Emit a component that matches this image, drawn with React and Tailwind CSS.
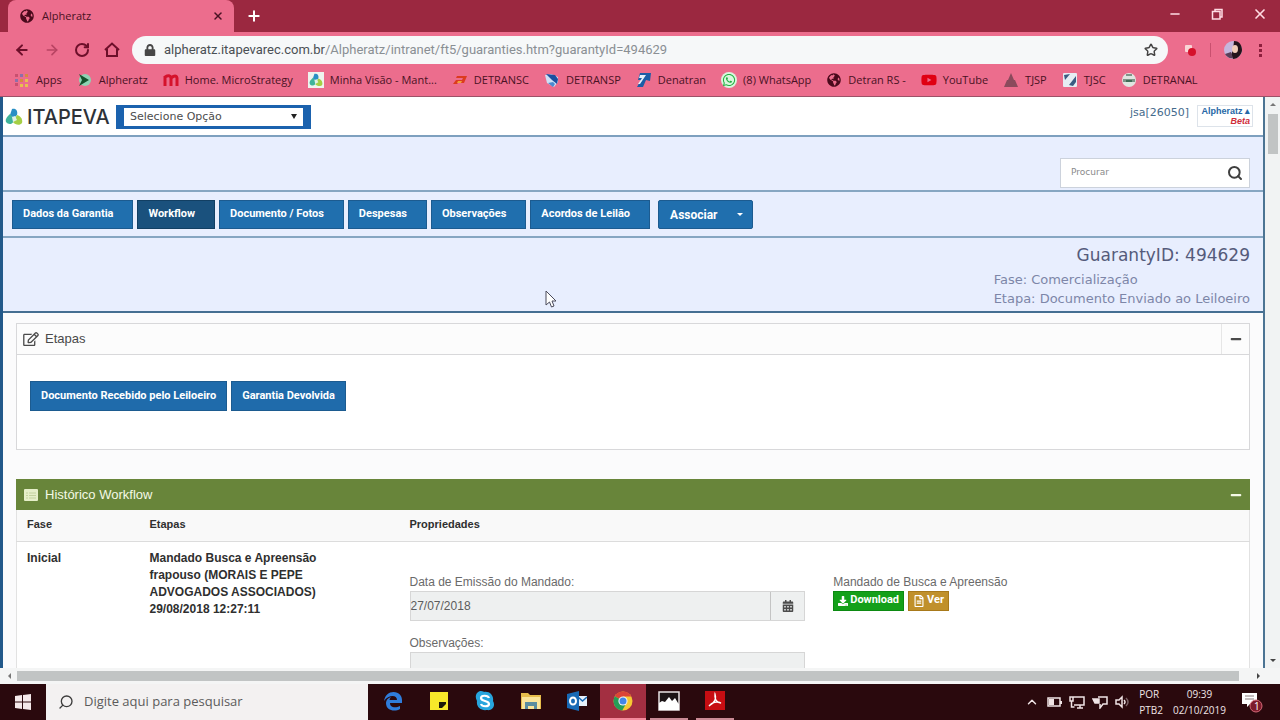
import {
  FaGlobeAmericas,
  FaLock,
  FaRegEdit,
  FaCalendarAlt,
  FaWhatsapp,
  FaYoutube,
  FaDownload,
  FaRegFileAlt,
  FaMinus,
} from "react-icons/fa";
import { ArrowLeft, ArrowRight, RotateCw, Plus, X, Minus, Star, Search, ChevronUp } from "lucide-react";

const GlobeIcon = () => <FaGlobeAmericas className="w-3.5 h-3.5 text-[#4a0a1c]" />;

const ItapevaMark = ({ className }) => (
  <svg viewBox="0 0 18 18" className={className} aria-hidden="true">
    <path d="M7 1c4-1 6 2 5 6l-3 3-4-3z" fill="#2a8fc4" />
    <path d="M5 6 9 11c0 6-6 6-8 3-1-3 1-5 4-8z" fill="#3fb39a" />
    <path d="M12 7c4 1 6 5 5 8-2 3-7 2-9-1z" fill="#a5cf45" />
    <path d="M7 9l3-1 2 4-4 2z" fill="#dff2e4" />
  </svg>
);

const BOOKMARKS = [
  {
    label: "Apps",
    icon: (
      <svg viewBox="0 0 16 16" className="w-4 h-4">
        <path d="M1 2h3v3H1zM1 11h3v3H1z" fill="#c9506f" />
        <path d="M6 2h3v3H6zM1 7h3v3H1z" fill="#8f6fa8" />
        <path d="M11 2h3v3h-3zM6 7h3v3H6z" fill="#d8893f" />
        <path d="M11 7h3v3h-3zM6 12h3v3H6zM11 12h3v3h-3z" fill="#e8c04f" />
      </svg>
    ),
  },
  {
    label: "Alpheratz",
    icon: (
      <svg viewBox="0 0 16 16" className="w-4 h-4">
        <circle cx="8" cy="8" r="6" fill="#8fd3b4" />
        <path d="M2 2l10 6-10 6 3-6z" fill="#14532d" />
      </svg>
    ),
  },
  {
    label: "Home. MicroStrategy",
    icon: (
      <svg viewBox="0 0 16 16" className="w-4 h-4">
        <path d="M2 14V4M2 5q5-3 6 1v8M8 6q5-4 6 0v8" fill="none" stroke="#d5122c" strokeWidth="3" />
      </svg>
    ),
  },
  {
    label: "Minha Visão - Mant...",
    icon: (
      <span className="flex w-4 h-4 items-center justify-center bg-[#eef4ee]">
        <ItapevaMark className="w-3.5 h-3.5" />
      </span>
    ),
  },
  {
    label: "DETRANSC",
    icon: (
      <svg viewBox="0 0 16 16" className="w-4 h-4">
        <path d="M1 12l3-4h6l1-2H4l1-2h10l-3 7H6l-1 1z" fill="#dc3b1f" />
        <path d="M6 9h4l-1 2H5z" fill="#f0a13c" />
      </svg>
    ),
  },
  {
    label: "DETRANSP",
    icon: (
      <svg viewBox="0 0 16 16" className="w-4 h-4">
        <path d="M1 3l6-1 7 3v5l-4 5-7-4z" fill="#cfe0f5" />
        <path d="M2 2l9 1 3 4-1 5-5-4z" fill="#1b4fa0" />
        <path d="M4 11l5-1 2 2-2 3z" fill="#4a8ad0" />
      </svg>
    ),
  },
  {
    label: "Denatran",
    icon: (
      <svg viewBox="0 0 16 16" className="w-4 h-4">
        <path d="M4 1h11l-1 8-4-1-3 7H1l4-7H2z" fill="#1a5da6" />
        <path d="M4 3h6l-6 9H2l4-6H3z" fill="#e4f0fa" />
      </svg>
    ),
  },
  {
    label: "(8) WhatsApp",
    icon: (
      <span className="flex w-4 h-4 items-center justify-center rounded-full bg-[#d9f7dd]">
        <FaWhatsapp className="w-3.5 h-3.5 text-[#1fb141]" />
      </span>
    ),
  },
  { label: "Detran RS -", icon: <GlobeIcon /> },
  {
    label: "YouTube",
    icon: <FaYoutube className="w-4 h-4 text-[#e00012]" />,
  },
  {
    label: "TJSP",
    icon: (
      <svg viewBox="0 0 16 16" className="w-4 h-4">
        <path d="M8 1l3 7h1l3 7H1l3-7h1z" fill="#8b4a5c" />
      </svg>
    ),
  },
  {
    label: "TJSC",
    icon: (
      <svg viewBox="0 0 16 16" className="w-4 h-4">
        <rect x="1" y="1" width="14" height="14" rx="1" fill="#e6edf3" />
        <path d="M2 3l6-1-5 6zM7 13l7-9v6l-3 4z" fill="#3b5c82" />
      </svg>
    ),
  },
  {
    label: "DETRANAL",
    icon: (
      <svg viewBox="0 0 16 16" className="w-4 h-4">
        <circle cx="8" cy="8" r="7" fill="#dfe5e0" />
        <path d="M5 2h6v2H5zM2 7h12v3H2z" fill="#7d9488" />
        <path d="M5 8h6v2H5z" fill="#3f6b55" />
      </svg>
    ),
  },
];

const NAV_ITEMS = [
  { label: "Dados da Garantia" },
  { label: "Workflow", active: true },
  { label: "Documento / Fotos" },
  { label: "Despesas" },
  { label: "Observações" },
  { label: "Acordos de Leilão" },
];

const BrowserChrome = () => (
  <header className="shrink-0 bg-[#ec6d8d] font-['Open_Sans',sans-serif] text-[#4a1224]">
    {/* Tabs */}
    <div className="flex h-8 items-end bg-[#9b2840] pl-2">
      <div className="flex h-full w-[226px] items-center rounded-t-lg bg-[#ec6d8d] pl-3 pr-2.5">
        <GlobeIcon />
        <span className="ml-2 flex-1 text-[11px]">Alpheratz</span>
        <button type="button" aria-label="Fechar guia">
          <X className="h-3 w-3" strokeWidth={3} />
        </button>
      </div>
      <button type="button" aria-label="Nova guia" className="ml-3 flex h-full items-center text-white">
        <Plus className="h-4 w-4" strokeWidth={3} />
      </button>
      <div className="ml-auto flex h-7 items-center gap-7 self-start pr-3 text-[#ffdbe3]">
        <button type="button" aria-label="Minimizar">
          <Minus className="h-3.5 w-3.5" strokeWidth={2.5} />
        </button>
        <button type="button" aria-label="Restaurar">
          <svg viewBox="0 0 14 14" className="h-3.5 w-3.5" fill="none" stroke="currentColor" strokeWidth="1.500">
            <path d="M5 4V2.500h7V10h-2M2.500 4.500H10V12H2.500z" />
          </svg>
        </button>
        <button type="button" aria-label="Fechar">
          <X className="h-4 w-4" strokeWidth={2.5} />
        </button>
      </div>
    </div>

    {/* Address bar */}
    <div className="flex h-9 items-center px-3.5 text-[#6d0f2a]">
      <div className="flex w-[118px] shrink-0 items-center gap-3.5">
        <button type="button" aria-label="Voltar">
          <ArrowLeft className="h-4 w-4" strokeWidth={3} />
        </button>
        <button type="button" aria-label="Avançar" className="text-[#b84463]">
          <ArrowRight className="h-4 w-4" strokeWidth={2.5} />
        </button>
        <button type="button" aria-label="Recarregar">
          <RotateCw className="h-4 w-4" strokeWidth={3} />
        </button>
        <button type="button" aria-label="Início">
          {/* plain outline house */}
          <svg viewBox="0 0 16 16" className="h-4 w-4" fill="none" stroke="currentColor" strokeWidth="2">
            <path d="M1 8l7-6.500L15 8M3 7v7h10V7" />
          </svg>
        </button>
      </div>
      <div className="flex h-7 flex-1 items-center rounded-full bg-[#f6f8f9] pl-3 pr-2.5">
        <FaLock className="h-3 w-3 text-[#474747]" />
        <div className="ml-2 flex-1 font-[Roboto,sans-serif] text-[13px] text-[#8a8f94]">
          <span className="text-[#4a4f54]">alpheratz.itapevarec.com.br</span>
          /Alpheratz/intranet/ft5/guaranties.htm?guarantyId=494629
        </div>
        <Star className="h-3.5 w-3.5 text-[#444]" strokeWidth={2.5} />
      </div>
      <div className="ml-4 flex items-center">
        <svg viewBox="0 0 14 14" className="h-3.5 w-3.5">
          <rect x="1" y="2" width="7" height="7" rx="1" fill="#f8d4d6" />
          <circle cx="8" cy="9" r="4" fill="#d5112b" />
        </svg>
        <span className="ml-3 h-3.5 w-px bg-[#c9506f]" />
        <svg viewBox="0 0 20 20" className="ml-3 h-5 w-5">
          <circle cx="10" cy="10" r="9" fill="#c5b6dd" />
          <path d="M11 1c6 0 8 5 8 9s-4 9-9 9l-2-4 2-5z" fill="#24141b" />
          <ellipse cx="12" cy="9" rx="3" ry="4" fill="#f1cdb8" />
          <path d="M2 14l6-2 2 6q-5 1-8-4z" fill="#5b3f59" />
        </svg>
        <span className="ml-4 mr-1 flex flex-col gap-0.5">
          <i className="h-[3px] w-[3px] bg-[#8d1f3d]" />
          <i className="h-[3px] w-[3px] bg-[#8d1f3d]" />
          <i className="h-[3px] w-[3px] bg-[#8d1f3d]" />
        </span>
      </div>
    </div>

    {/* Bookmarks */}
    <nav className="flex h-[29px] items-center gap-[15px] overflow-hidden border-b border-[#9c5268] px-3.5 pb-1">
      {BOOKMARKS.map((item) => (
        <a key={item.label} href="#" className="flex shrink-0 items-center gap-1.5 whitespace-nowrap text-[11px]">
          <span className="flex w-4 justify-center">{item.icon}</span>
          {item.label}
        </a>
      ))}
    </nav>
  </header>
);

const SiteHeader = () => (
  <div className="flex h-10 items-start border-b-2 border-[#7ea0bf] bg-white pl-0.5 pr-2.5">
    <div className="mt-2 flex w-[111px] items-center gap-1">
      <ItapevaMark className="h-[18px] w-[18px] shrink-0" />
      <span className="whitespace-nowrap font-[Inter,sans-serif] text-[20px] font-medium leading-6 text-[#2e3238]">
        ITAPEVA
      </span>
    </div>
    <div className="relative mt-2 flex h-6 w-[195px] border-x-8 border-y-[3px] border-[#1b62ae] bg-white">
      <select
        aria-label="Selecione Opção"
        className="h-full w-full appearance-none bg-transparent pl-1.5 font-['DejaVu_Sans',sans-serif] text-[11px] leading-[18px] text-[#4c4c4c]"
      >
        <option>Selecione Opção</option>
      </select>
      <span className="pointer-events-none absolute right-1.5 top-1.5 border-x-[3px] border-t-[5px] border-x-transparent border-t-[#222]" />
    </div>
    <div className="ml-auto mt-2 flex items-start gap-2">
      <span className="font-['DejaVu_Sans',sans-serif] text-[11px] leading-4 text-[#456a8c]">jsa[26050]</span>
      <div className="flex w-14 flex-col items-end border border-[#dde3ea] px-0.5 text-[9px] font-bold leading-[10px]">
        <span className="text-[#2767a6]">Alpheratz ▴</span>
        <span className="italic text-[#cf2c39]">Beta</span>
      </div>
    </div>
  </div>
);

const SiteNav = () => (
  <div className="flex h-[46px] items-start gap-1 border-b-2 border-[#86a6c2] px-[9px] pt-2 font-[Roboto,sans-serif] text-[11px] font-bold text-white">
    {NAV_ITEMS.map((item) => (
      <button
        key={item.label}
        type="button"
        className={
          item.active
            ? "h-[29px] border border-[#123f63] bg-[#1a517d] pl-2.5 pr-[19px]"
            : "h-[29px] border border-[#1c5b90] bg-[#206fae] pl-2.5 pr-[19px]"
        }
      >
        {item.label}
      </button>
    ))}
    <div className="ml-1 flex h-[29px] rounded-xs border border-[#1c5b90] bg-[#206fae] text-[12px]">
      <button type="button" className="px-[11px]">
        Associar
      </button>
      <button type="button" aria-label="Abrir menu" className="flex w-6 items-center justify-center">
        <span className="border-x-[3px] border-t-[3px] border-x-transparent border-t-white" />
      </button>
    </div>
  </div>
);

const StepsPanel = () => (
  <section className="border border-[#d8d8da] bg-white">
    <div className="flex h-[31px] items-center border-b border-[#d8d8da] bg-[#fcfcfc] pl-1.5 text-[#4a4a4a]">
      <FaRegEdit className="h-3.5 w-4" />
      <h2 className="ml-1.5 text-[13px]">Etapas</h2>
      <button
        type="button"
        aria-label="Recolher etapas"
        className="ml-auto flex h-full w-7 items-center justify-center border-l border-[#e6e6e6]"
      >
        <FaMinus className="h-3 w-3" />
      </button>
    </div>
    <div className="flex h-[94px] items-start gap-1 px-[13px] pt-[26px] font-[Roboto,sans-serif] text-[11px] font-bold text-white">
      <button type="button" className="h-[30px] border border-[#1c5b90] bg-[#1f6bab] px-2.5">
        Documento Recebido pelo Leiloeiro
      </button>
      <button type="button" className="h-[30px] border border-[#1c5b90] bg-[#1f6bab] px-2.5">
        Garantia Devolvida
      </button>
    </div>
  </section>
);

const HistoryPanel = () => (
  <section className="mt-[29px]">
    <div className="flex h-[31px] items-center bg-[#68853a] pl-2 text-[#f4f9e6]">
      <svg viewBox="0 0 14 12" className="h-3 w-3.5" aria-hidden="true">
        <rect width="14" height="12" rx="1" fill="#e6efc9" />
        <path d="M2 4h2M5 4h7M2 6.500h2M5 6.500h7M2 9h2M5 9h7" stroke="#c3d29e" />
      </svg>
      <h2 className="ml-[7px] text-[13px]">Histórico Workflow</h2>
      <button type="button" aria-label="Recolher histórico" className="ml-auto flex h-full w-7 items-center justify-center">
        <FaMinus className="h-3 w-3" />
      </button>
    </div>
    <table className="w-full table-fixed border-x border-[#e2e2e2] bg-white text-left text-[#2f2f2f]">
      <thead>
        <tr className="h-[31px] border-b border-[#dcdcdc] bg-[#f9f9f9] text-[11px]">
          <th className="w-[123px] pb-0.5 pl-2.5">Fase</th>
          <th className="w-[260px] pb-0.5 pl-2.5">Etapas</th>
          <th className="pb-0.5 pl-2.5">Propriedades</th>
        </tr>
      </thead>
      <tbody>
        <tr className="align-top text-[12px]">
          <td className="pl-2.5 pt-2 font-bold leading-[17px]">Inicial</td>
          <td className="pl-2.5 pt-2 font-bold leading-[17px]">
            Mandado Busca e Apreensão
            <br />
            frapouso (MORAIS E PEPE
            <br />
            ADVOGADOS ASSOCIADOS)
            <br />
            29/08/2018 12:27:11
          </td>
          <td className="pl-2.5 pt-8 text-[#6a6a6a]">
            <div className="grid grid-cols-2">
              <div className="pr-6">
                <label htmlFor="data-emissao" className="block leading-[17px]">
                  Data de Emissão do Mandado:
                </label>
                <div className="flex h-[30px] border border-[#d6d6d6] bg-[#eef0f0]">
                  <input
                    id="data-emissao"
                    defaultValue="27/07/2018"
                    readOnly
                    className="min-w-0 flex-1 bg-transparent text-[#5c5c5c]"
                  />
                  <button
                    type="button"
                    aria-label="Abrir calendário"
                    className="flex w-[34px] items-center justify-center border-l border-[#c4c4c4] text-[#4c4c4c]"
                  >
                    <FaCalendarAlt className="h-3 w-3" />
                  </button>
                </div>
                <label htmlFor="observacoes" className="mt-3.5 block leading-[17px]">
                  Observações:
                </label>
                <textarea
                  id="observacoes"
                  readOnly
                  className="block h-14 w-full resize-none border border-[#d6d6d6] bg-[#eef0f0]"
                />
              </div>
              <div className="pl-1">
                <p className="leading-[17px]">Mandado de Busca e Apreensão</p>
                <div className="flex gap-1 font-[Roboto,sans-serif] text-[11px] font-bold text-white">
                  <button type="button" className="flex h-5 items-center gap-0.5 border border-[#0c8a12] bg-[#14a01a] px-1">
                    <FaDownload className="h-2.5 w-2.5" />
                    Download
                  </button>
                  <button type="button" className="flex h-5 items-center gap-0.5 border border-[#a8791a] bg-[#c0902b] px-1">
                    <FaRegFileAlt className="h-3 w-3" />
                    Ver
                  </button>
                </div>
              </div>
            </div>
          </td>
        </tr>
      </tbody>
    </table>
  </section>
);

const TASKBAR_APPS = [
  {
    name: "Edge",
    icon: (
      <svg viewBox="0 0 20 20" className="h-5 w-5">
        <path
          d="M1 10C2 4 6 1 10.500 1 16 1 19 5 19 9v3H7c0 5 6 5 10 3v3c-5 3-14 2-14-6 0-3 2-5 5-6-1 1-1.500 2-1.500 3H14c0-6-9-5-13 1z"
          fill="#2f7ddb"
        />
      </svg>
    ),
  },
  {
    name: "Notas",
    icon: (
      <svg viewBox="0 0 20 20" className="h-5 w-5">
        <path d="M1 1h18v18H1z" fill="#f7e92a" />
        <path d="M10 11h7v2l-4 4h-3z" fill="#1d1a08" />
      </svg>
    ),
  },
  {
    name: "Skype",
    icon: (
      <svg viewBox="0 0 20 20" className="h-5 w-5">
        <path d="M6 0c2 0 3 1 3 1 6-1 10 4 9 9 3 5-1 10-6 9-6 1-11-3-10-9C-1 5 2 0 6 0z" fill="#27a5dd" />
        <path d="M14 7c-1-3-8-3-8 0 0 4 8 2 8 6 0 3-7 3-8 0" fill="none" stroke="#fff" strokeWidth="2.200" />
      </svg>
    ),
  },
  {
    name: "Explorador",
    icon: (
      <svg viewBox="0 0 20 20" className="h-5 w-5">
        <path d="M0 2h7l2 2h11v14H0z" fill="#e7bd4b" />
        <path d="M1 6h18v12H1z" fill="#fbe59a" />
        <path d="M4 18v-7h12v7h-3v-3H7v3z" fill="#5b8ea0" />
      </svg>
    ),
  },
  {
    name: "Outlook",
    icon: (
      <svg viewBox="0 0 20 20" className="h-5 w-5">
        <path d="M11 5h9v10h-9z" fill="#e6f0fa" />
        <path d="M11 6l4.500 4L20 6" fill="none" stroke="#1769b5" strokeWidth="1.500" />
        <path d="M0 3l12-3v20L0 17z" fill="#1769b5" />
        <ellipse cx="6" cy="10" rx="3" ry="3.500" fill="none" stroke="#fff" strokeWidth="2" />
      </svg>
    ),
  },
  {
    name: "Chrome",
    active: true,
    icon: (
      <svg viewBox="0 0 20 20" className="h-5 w-5">
        <circle cx="10" cy="10" r="9.500" fill="#f6c934" />
        <path d="M10 10 1.800 5.200A9.500 9.500 0 0 1 18.300 5.500H10z" fill="#dc4437" />
        <path d="M1.800 5.200A9.500 9.500 0 0 0 9.200 19.500L13.500 12 10 10z" fill="#269d58" />
        <circle cx="10" cy="10" r="4.600" fill="#f4f4f4" />
        <circle cx="10" cy="10" r="3.500" fill="#4286e8" />
      </svg>
    ),
  },
  {
    name: "Fotos",
    open: true,
    icon: (
      <svg viewBox="0 0 22 20" className="h-5 w-[22px]">
        <path d="M1 1h20v18H1z" fill="#1c1416" stroke="#e8e2e3" strokeWidth="1.500" />
        <path d="M1 19v-7l3-2 3 1 4-5 3 4 3-3 3 5 1 1v6z" fill="#fff" />
      </svg>
    ),
  },
  {
    name: "Acrobat",
    open: true,
    icon: (
      <svg viewBox="0 0 20 20" className="h-5 w-5">
        <path d="M0 0h20v19H0z" fill="#c70d12" />
        <path d="M10 3c2 5-1 9-6 12 3-4 8-5 12-3-4 0-7-4-6-9z" fill="none" stroke="#fff" strokeWidth="1.300" />
      </svg>
    ),
  },
];

const Taskbar = () => (
  <footer className="flex h-9 shrink-0 items-stretch bg-[#2a090d] font-['Open_Sans',sans-serif] text-white">
    <button type="button" aria-label="Iniciar" className="flex w-[46px] items-center justify-center">
      <svg viewBox="0 0 16 16" className="h-4 w-4" fill="#f5e9ea">
        <path d="M0 2l7-1v6.500H0zM8 1l8-1v7.500H8zM0 8.500h7V15l-7-1zM8 8.500h8V16l-8-1z" />
      </svg>
    </button>
    <div className="flex w-[322px] items-center gap-2.5 bg-[#f3f1f1] pl-3">
      <Search className="h-4 w-4 -scale-x-100 text-[#3c3c3c]" />
      <input
        type="text"
        aria-label="Pesquisar"
        placeholder="Digite aqui para pesquisar"
        className="min-w-0 flex-1 bg-transparent text-[13px] placeholder:text-[#5b5b5b]"
      />
    </div>
    <div className="flex pl-0.5">
      {TASKBAR_APPS.map((app) => (
        <button
          key={app.name}
          type="button"
          aria-label={app.name}
          className={
            app.active
              ? "flex w-[46px] items-center justify-center border-b-2 border-[#f48a9c] bg-[#a32f41]"
              : app.open
                ? "mx-1 flex w-[38px] items-center justify-center border-b-2 border-[#c98a95]"
                : "flex w-[46px] items-center justify-center border-b-2 border-transparent"
          }
        >
          {app.icon}
        </button>
      ))}
    </div>
    <div className="ml-auto flex items-center pr-4 text-[10px] leading-4 text-[#f0e4e5]">
      <div className="flex items-center gap-[7px]">
        <ChevronUp className="h-3.5 w-3.5" strokeWidth={2.5} />
        <svg viewBox="0 0 16 14" className="h-3.5 w-4" fill="none" stroke="currentColor" strokeWidth="1.500">
          <path d="M2 3h12v8H2z" />
          <path d="M3 4h5v6H3zM14 6h2v3h-2z" fill="currentColor" stroke="none" />
        </svg>
        <svg viewBox="0 0 16 14" className="h-3.5 w-4" fill="none" stroke="currentColor" strokeWidth="1.500">
          <path d="M4 2h11v8H5M8 13h6M11 10v3M1 2h3v4H1zM2.500 6v6h3" />
        </svg>
        <svg viewBox="0 0 16 14" className="h-3.5 w-4" fill="none" stroke="currentColor" strokeWidth="1.500">
          <path d="M6 2h9v7h-4l-3 4V9" />
          <path d="M1 4h6v4H3z" fill="currentColor" />
        </svg>
        <svg viewBox="0 0 16 14" className="h-3.5 w-4" fill="none" stroke="currentColor" strokeWidth="1.500">
          <path d="M1 5h3l3-3v10L4 9H1zM9 5q2 2 0 4" />
          <path d="M11 3q4 4 0 8" opacity="0.400" />
        </svg>
      </div>
      <div className="ml-2">
        <div>POR</div>
        <div>PTB2</div>
      </div>
      <div className="ml-2.5 text-center">
        <div>09:39</div>
        <div>02/10/2019</div>
      </div>
      <svg viewBox="0 0 24 24" className="ml-3.5 h-6 w-6">
        <path d="M2 3h15v11h-7l-3 3v-3H2z" fill="#fff" />
        <path d="M5 6h9M5 9h9" stroke="#8a7a7c" />
        <circle cx="16" cy="16" r="6" fill="#7d1c2c" stroke="#d46a78" />
        <text x="14" y="20" fontSize="10" fill="#fff" fontFamily="Open Sans, sans-serif">
          1
        </text>
      </svg>
    </div>
  </footer>
);

export default function App() {
  return (
    <div className="relative flex h-screen flex-col overflow-hidden bg-white font-['Liberation_Sans',Arial,sans-serif]">
      <BrowserChrome />

      <div className="flex min-h-0 flex-1">
        <main className="min-w-0 flex-1 overflow-hidden border-l-[3px] border-r-2 border-l-[#22598a] border-r-[#4c7493] bg-[#fbfbfc]">
          <SiteHeader />
          <div className="bg-[#e8eefe]">
            <div className="flex h-[55px] items-end justify-end border-b-2 border-[#86a6c2] pb-0.5 pr-[13px]">
              <div className="flex h-[30px] w-[190px] items-center border border-[#ccd2dc] bg-white px-2.5">
                <input
                  type="text"
                  aria-label="Procurar"
                  placeholder="Procurar"
                  className="min-w-0 flex-1 font-['DejaVu_Sans',sans-serif] text-[9px] placeholder:text-[#8a8a8a]"
                />
                <button type="button" aria-label="Buscar" className="-mr-1">
                  <Search className="h-4 w-4 text-[#3f3f3f]" strokeWidth={3} />
                </button>
              </div>
            </div>
            <SiteNav />
            <div className="flex h-[75px] flex-col items-end border-b-2 border-[#456f92] pr-[13px] pt-1.5 font-['DejaVu_Sans',sans-serif]">
              <h1 className="text-[17px] leading-[22px] text-[#555b7b]">GuarantyID: 494629</h1>
              <div className="mt-1 text-[13px] leading-[19px] text-[#7d86a8]">
                <p>Fase: Comercialização</p>
                <p>Etapa: Documento Enviado ao Leiloeiro</p>
              </div>
            </div>
          </div>
          <div className="px-[13px] pt-2.5">
            <StepsPanel />
            <HistoryPanel />
          </div>
        </main>

        {/* Vertical scrollbar */}
        <div className="flex w-[15px] flex-col items-center bg-[#f1f3f3] py-1.5">
          <span className="border-x-[3px] border-b-[3px] border-x-transparent border-b-[#777]" />
          <span className="mt-2 h-10 w-2.5 bg-[#c1c4c4]" />
          <span className="mt-auto border-x-[3px] border-t-[3px] border-x-transparent border-t-[#444]" />
        </div>
      </div>

      {/* Horizontal scrollbar */}
      <div className="flex h-4 shrink-0 items-center bg-[#f4f5f5] pl-2">
        <span className="border-y-[3px] border-r-[3px] border-y-transparent border-r-[#777]" />
        <span className="ml-1.5 h-2.5 flex-1 bg-[#c1c4c4]" />
        <span className="ml-[18px] mr-5 border-y-[3px] border-l-[3px] border-y-transparent border-l-[#444]" />
      </div>

      <Taskbar />

      {/* Mouse pointer */}
      <svg viewBox="0 0 12 18" className="pointer-events-none absolute left-[545px] top-[290px] h-[18px] w-3">
        <path d="M1 1v14l3.500-3 2 5 2.500-1-2-5h4z" fill="#fff" stroke="#4a4a5a" />
      </svg>
    </div>
  );
}
